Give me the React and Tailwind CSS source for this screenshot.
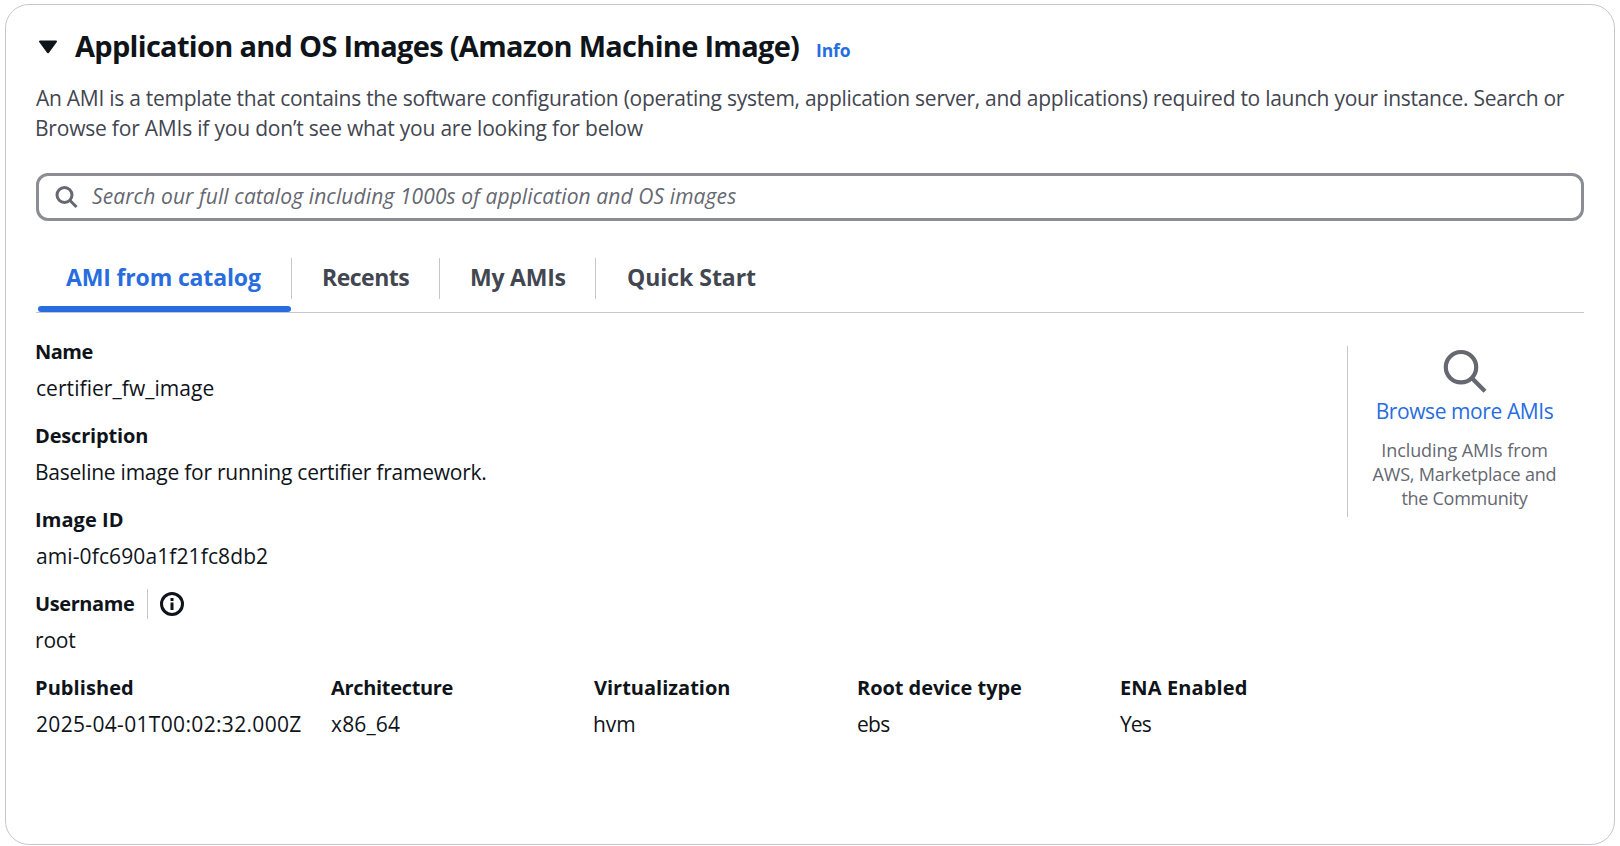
import React from 'react';

const tabs = [
  { label: 'Recents', box: 'w-[148px] pl-[30px]', track: 'tracking-[-0.5px]' },
  { label: 'My AMIs', box: 'w-[156px] pl-[30px]', track: 'tracking-[-0.22px]' },
  { label: 'Quick Start', box: 'pl-[31px]', track: 'tracking-[-0.04px]' },
];

const details = [
  { label: 'Published', value: '2025-04-01T00:02:32.000Z', box: 'w-[295px]', lt: '-ml-px tracking-[0.07px]', vt: 'tracking-[0.33px]' },
  { label: 'Architecture', value: 'x86_64', box: 'w-[263px]', lt: 'tracking-[-0.32px]', vt: 'tracking-[0.16px]' },
  { label: 'Virtualization', value: 'hvm', box: 'w-[263px]', lt: 'tracking-[0px]', vt: '-ml-px tracking-[-0.1px]' },
  { label: 'Root device type', value: 'ebs', box: 'w-[263px]', lt: 'tracking-[-0.05px]', vt: 'tracking-[-0.7px]' },
  { label: 'ENA Enabled', value: 'Yes', box: '', lt: 'tracking-[0.12px]', vt: 'tracking-[-0.9px]' },
];

function Field({ label, value, lt, vt, box = '', children }) {
  return (
    <div className={`flex shrink-0 flex-col gap-1.5 ${box}`}>
      <div className="flex h-[30px] items-center">
        <div className={`whitespace-nowrap text-xl leading-[30px] font-bold ${lt}`}>{label}</div>
        {children}
      </div>
      <div className={`whitespace-nowrap ${vt}`}>{value}</div>
    </div>
  );
}

export default function App() {
  return (
    <div className="h-[846px] w-[1620px] overflow-hidden bg-white pl-[5px] pt-1 font-['Open_Sans',sans-serif] text-[21px] leading-[30px] text-[#0f141a]">
      <section className="h-[841px] w-[1610px] rounded-3xl border border-[#c6c6cd] pl-[30px] pr-[30px] pt-[23px]">
        <header className="flex h-9 items-center">
          <svg width="24" height="24" viewBox="0 0 24 24" className="shrink-0">
            <path d="M4 7.5h16L12 18.3z" fill="#0f141a" stroke="#0f141a" strokeWidth="2" strokeLinejoin="round" />
          </svg>
          <div className="flex items-baseline">
            <h2 className="ml-[15px] w-[741px] whitespace-nowrap text-[29px] font-bold leading-9 tracking-[-0.7px]">
              Application and OS Images (Amazon Machine Image)
            </h2>
            <a className="text-[17.5px] font-bold leading-6 tracking-[-0.1px] text-[#276de0]">Info</a>
          </div>
        </header>

        <p className="mt-[19px] whitespace-nowrap text-[#424650]">
          <span className="block tracking-[-0.27px]">
            An AMI is a template that contains the software configuration (operating system, application server, and applications) required to launch your instance. Search or
          </span>
          <span className="-ml-px block tracking-[-0.205px]">
            Browse for AMIs if you don’t see what you are looking for below
          </span>
        </p>

        <div className="mt-[30px] flex h-12 items-center rounded-xl border-[3px] border-[#8c8c94] pl-4">
          <svg width="24" height="24" viewBox="0 0 24 24" fill="none" stroke="#656871" strokeWidth="3" className="shrink-0">
            <circle cx="9.5" cy="10" r="7.5" />
            <path d="M15 15.5l6.5 6.5" />
          </svg>
          <span className="-mt-0.5 ml-[13px] whitespace-nowrap italic tracking-[0.1px] text-[#656871]">
            Search our full catalog including 1000s of application and OS images
          </span>
        </div>

        <nav className="mt-[37px] flex h-[55px] items-start border-b border-[#c6c6cd] text-[23px] font-bold leading-[39px] text-[#424650]">
          <div className="flex h-[54px] w-[256px] flex-col justify-between pl-0.5">
            <div className="h-[41px] border-r border-[#c6c6cd] pl-[28px]">
              <span className="whitespace-nowrap tracking-[-0.15px] text-[#276de0]">AMI from catalog</span>
            </div>
            <div className="h-1.5 w-[253px] rounded-full bg-[#276de0]" />
          </div>
          {tabs.map((t, i) => (
            <div key={t.label} className={`h-[41px] whitespace-nowrap ${i < 2 ? 'border-r border-[#c6c6cd]' : ''} ${t.box} ${t.track}`}>
              {t.label}
            </div>
          ))}
        </nav>

        <div className="flex justify-between pt-6">
          <div className="flex flex-col gap-[18px]">
            <Field label="Name" value="certifier_fw_image" lt="-ml-px tracking-[-0.5px]" vt="tracking-[0.06px]" />
            <Field label="Description" value="Baseline image for running certifier framework." lt="-ml-px tracking-[-0.17px]" vt="-ml-px tracking-[-0.24px]" />
            <Field label="Image ID" value="ami-0fc690a1f21fc8db2" lt="-ml-px tracking-[0.06px]" vt="tracking-[0.11px]" />
            <Field label="Username" value="root" lt="-ml-px w-[112px] tracking-[-0.4px]" vt="-ml-px tracking-[-0.2px]">
              <span className="h-[30px] w-px bg-[#c6c6cd]" />
              <svg width="24" height="24" viewBox="0 0 24 24" fill="none" className="ml-3">
                <circle cx="12" cy="12" r="10.5" stroke="#0f141a" strokeWidth="3" />
                <path d="M12 6v3M12 10.5v7.5" stroke="#0f141a" strokeWidth="3" />
              </svg>
            </Field>
            <div className="flex">
              {details.map((d) => (
                <Field key={d.label} {...d} />
              ))}
            </div>
          </div>

          <aside className="mt-[9px] flex h-[171px] w-[237px] shrink-0 flex-col items-center border-l border-[#c6c6cd] pr-[3px] pt-[3px]">
            <svg width="44" height="44" viewBox="0 0 44 44" fill="none" stroke="#656871" strokeWidth="4.2">
              <circle cx="18" cy="18.2" r="15.2" />
              <path d="M28.5 28.7L42 42.2" />
            </svg>
            <a className="mt-[3px] whitespace-nowrap tracking-[-0.416px] text-[#276de0]">Browse more AMIs</a>
            <div className="mt-3 flex flex-col items-center whitespace-nowrap text-lg leading-6 text-[#656871]">
              <span className="tracking-[-0.08px]">Including AMIs from</span>
              <span className="tracking-[-0.197px]">AWS, Marketplace and</span>
              <span className="tracking-[-0.273px]">the Community</span>
            </div>
          </aside>
        </div>
      </section>
    </div>
  );
}
